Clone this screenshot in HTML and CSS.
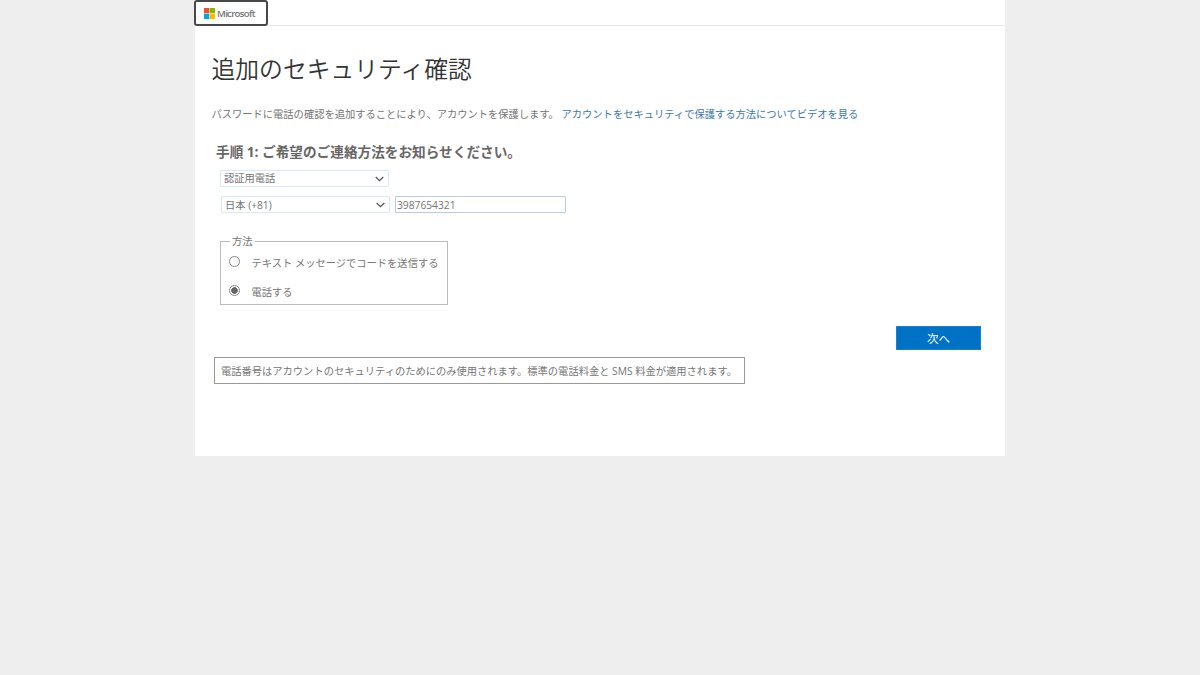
FILE: index.html
```html
<!DOCTYPE html>
<html lang="ja">

<head>
    <meta charset="UTF-8">
    <meta name="viewport" content="width=device-width, initial-scale=1.0">
    <title>追加のセキュリティ確認</title>
    <link rel="stylesheet" href="styles.css">
</head>

<body>
    <main class="container">
        <header class="header">
            <a class="logo" href="#">
                <svg class="logo-mark" viewBox="0 0 23 23">
                    <path fill="#f25022" d="M0 0h11v11H0z" />
                    <path fill="#7fba00" d="M12 0h11v11H12z" />
                    <path fill="#00a4ef" d="M0 12h11v11H0z" />
                    <path fill="#ffb900" d="M12 12h11v11H12z" />
                </svg>
                <span class="logo-text">Microsoft</span>
            </a>
        </header>

        <h1 class="title">追加のセキュリティ確認</h1>
        <p class="intro">パスワードに電話の確認を追加することにより、アカウントを保護します。 <a class="link" href="#">アカウントをセキュリティで保護する方法についてビデオを見る</a></p>

        <form class="form">
            <h2 class="step">手順 1: ご希望のご連絡方法をお知らせください。</h2>
            <select class="select contact-select">
                <option>認証用電話</option>
            </select>
            <div class="phone-row">
                <select class="select">
                    <option>日本 (+81)</option>
                </select>
                <input class="phone-input" type="text" value="3987654321">
            </div>

            <fieldset class="methods">
                <legend class="methods-title">方法</legend>
                <label class="method">
                    <input class="radio" type="radio" name="method">
                    <span>テキスト メッセージでコードを送信する</span>
                </label>
                <label class="method">
                    <input class="radio" type="radio" name="method" checked>
                    <span>電話する</span>
                </label>
            </fieldset>

            <button class="next-button" type="button">次へ</button>
        </form>

        <p class="note">電話番号はアカウントのセキュリティのためにのみ使用されます。標準の電話料金と SMS 料金が適用されます。</p>
    </main>
</body>

</html>
```

FILE: styles.css
```css
body {
    margin: 0;
    background: #eee;
    color: #757575;
    font-family: "Open Sans", "Noto Sans CJK JP", sans-serif;
    font-size: 10.27px;
    line-height: 16px;
}

.container {
    width: 810px;
    height: 456px;
    margin: 0 auto;
    background: #fff;
}

.header {
    height: 25px;
    border-bottom: 1px solid #eaeaea;
}

.logo {
    display: flex;
    align-items: center;
    box-sizing: border-box;
    width: 74px;
    height: 26px;
    margin-left: -1px;
    padding: 1px 0 0 8px;
    border: 2px solid #484848;
    border-radius: 3px;
    background: #fff;
    color: #737373;
    text-decoration: none;
}

.logo-mark {
    width: 11px;
    height: 11px;
    margin-right: 2px;
}

.logo-text {
    font-size: 9.6px;
    font-weight: 600;
    letter-spacing: -0.7px;
}

.title {
    margin: 26px 0 0 16.5px;
    color: #333;
    font-size: 23.8px;
    font-weight: 350;
    line-height: 34px;
}

.intro {
    margin: 20px 0 0 16.5px;
}

.link {
    color: #3c78a8;
    text-decoration: none;
}

.form {
    display: flex;
    flex-direction: column;
    align-items: flex-start;
    padding: 20px 24px 0 25px;
}

.step {
    margin: 0 0 8px -4px;
    color: #666;
    font-size: 13.65px;
    font-weight: 700;
    line-height: 20px;
}

.select,
.phone-input {
    box-sizing: border-box;
    height: 17px;
    background-color: #fff;
    color: #757575;
    font-family: inherit;
    font-size: 10.24px;
}

.select {
    width: 169px;
    padding: 0 3px;
    appearance: none;
    border: 1px solid #d8eaf7;
    border-radius: 1px;
    background-image: url("data:image/svg+xml,%3Csvg xmlns='http://www.w3.org/2000/svg' width='9' height='6'%3E%3Cpath d='M.7 1 4.5 4.6 8.3 1' fill='none' stroke='%23555' stroke-width='1.3'/%3E%3C/svg%3E");
    background-repeat: no-repeat;
    background-position: right 4px center;
}

.contact-select {
    padding-bottom: 1px;
}

.phone-row {
    display: flex;
    gap: 5px;
    margin: 9px 0 0 1px;
}

.phone-input {
    width: 171px;
    padding: 1px 1px 0;
    border: 1px solid #b9cbdc;
    border-radius: 1px;
}

.methods {
    box-sizing: border-box;
    width: 228px;
    height: 72px;
    margin: 20px 0 0;
    padding: 6px 8px 0;
    border: 1px solid #bbb;
}

.methods-title {
    padding: 0 2px;
    margin-left: 1px;
}

.method {
    display: flex;
    align-items: center;
    height: 16px;
    margin-bottom: 13px;
}

.radio {
    flex: none;
    width: 11px;
    height: 11px;
    margin: 0 11.5px 3px 0;
    appearance: none;
    border: 1px solid #858585;
    border-radius: 50%;
    box-sizing: border-box;
}

.radio:checked {
    background: radial-gradient(circle, #666 3px, #fff 3.6px);
}

.next-button {
    align-self: flex-end;
    width: 85px;
    height: 24px;
    margin-top: 21px;
    padding: 0 0 1px;
    border: 1px solid #1b80cd;
    background: #0072c6;
    color: #fff;
    font-family: inherit;
    font-size: 11.5px;
}

.note {
    box-sizing: border-box;
    width: 531px;
    height: 27px;
    margin: 7px 0 0 19px;
    padding: 5px 6px;
    border: 1px solid #999;
    white-space: nowrap;
}
```
